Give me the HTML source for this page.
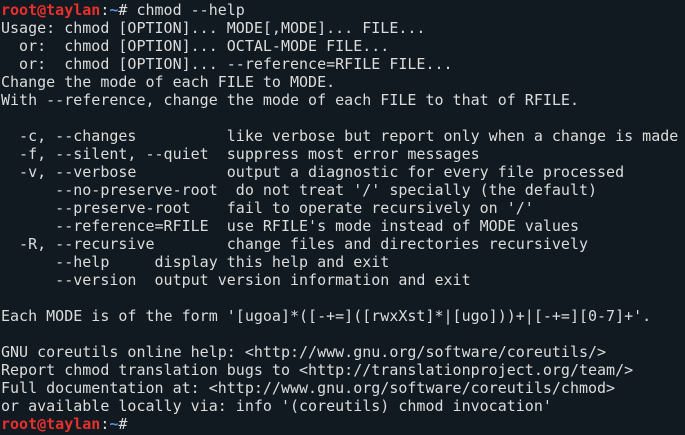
<!DOCTYPE html><html><head><style>
body{margin:0;width:685px;height:435px;overflow:hidden;background:#101a20;}
pre{margin:0;padding:0 0 0 1px;font-family:"DejaVu Sans Mono","Liberation Mono",monospace;font-size:15px;line-height:18px;color:#dcdcdc;position:relative;top:1px;}
.r{color:#e8302c;font-weight:bold}.b{color:#5f8fd4;font-weight:bold}
</style></head><body><pre><span class="r">root@taylan</span>:<span class="b">~</span># chmod --help
Usage: chmod [OPTION]... MODE[,MODE]... FILE...
  or:  chmod [OPTION]... OCTAL-MODE FILE...
  or:  chmod [OPTION]... --reference=RFILE FILE...
Change the mode of each FILE to MODE.
With --reference, change the mode of each FILE to that of RFILE.

  -c, --changes          like verbose but report only when a change is made
  -f, --silent, --quiet  suppress most error messages
  -v, --verbose          output a diagnostic for every file processed
      --no-preserve-root  do not treat '/' specially (the default)
      --preserve-root    fail to operate recursively on '/'
      --reference=RFILE  use RFILE's mode instead of MODE values
  -R, --recursive        change files and directories recursively
      --help     display this help and exit
      --version  output version information and exit

Each MODE is of the form '[ugoa]*([-+=]([rwxXst]*|[ugo]))+|[-+=][0-7]+'.

GNU coreutils online help: &lt;http://www.gnu.org/software/coreutils/&gt;
Report chmod translation bugs to &lt;http://translationproject.org/team/&gt;
Full documentation at: &lt;http://www.gnu.org/software/coreutils/chmod&gt;
or available locally via: info '(coreutils) chmod invocation'
<span class="r">root@taylan</span>:<span class="b">~</span># </pre></body></html>
